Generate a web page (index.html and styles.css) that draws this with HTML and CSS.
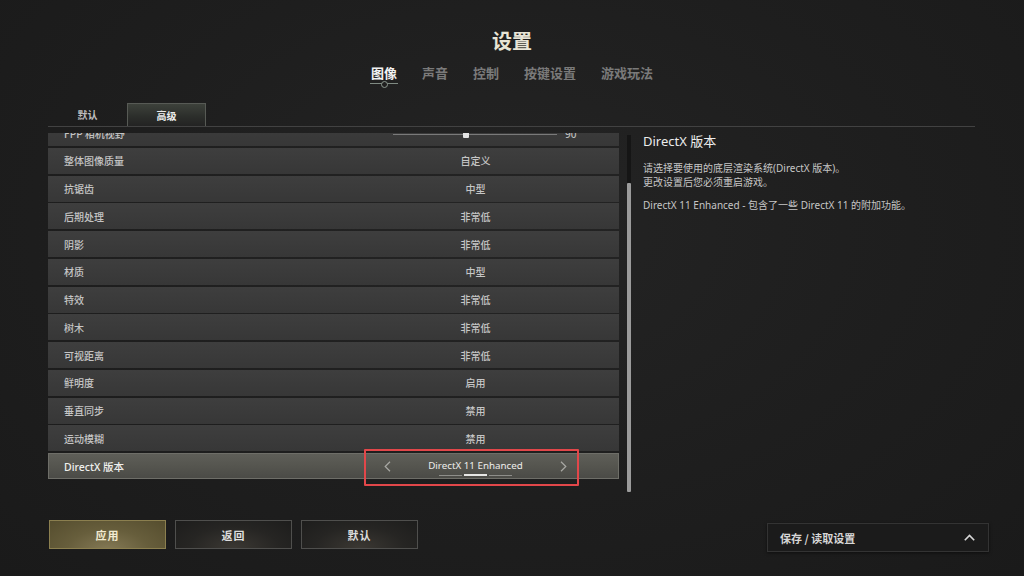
FILE: index.html
```html
<!DOCTYPE html>
<html lang="zh-CN">
<head>
<meta charset="utf-8">
<title>设置</title>
<link rel="stylesheet" href="styles.css">
</head>
<body>
<div class="page">
  <header class="header">
    <h1 class="title">设置</h1>
    <nav class="tabs">
      <span class="tab active">图像</span>
      <span class="tab">声音</span>
      <span class="tab">控制</span>
      <span class="tab">按键设置</span>
      <span class="tab">游戏玩法</span>
    </nav>
  </header>

  <div class="subtabs">
    <span class="subtab">默认</span>
    <span class="subtab selected">高级</span>
  </div>

  <main class="main">
    <div class="list-viewport">
      <div class="list">
        <div class="row">
          <span class="label">FPP 相机视野</span>
          <span class="slider">
            <span class="track track-left"></span>
            <span class="handle"></span>
            <span class="track track-right"></span>
            <span class="slider-val">90</span>
          </span>
        </div>
        <div class="row"><span class="label">整体图像质量</span><span class="value">自定义</span></div>
        <div class="row"><span class="label">抗锯齿</span><span class="value">中型</span></div>
        <div class="row"><span class="label">后期处理</span><span class="value">非常低</span></div>
        <div class="row"><span class="label">阴影</span><span class="value">非常低</span></div>
        <div class="row"><span class="label">材质</span><span class="value">中型</span></div>
        <div class="row"><span class="label">特效</span><span class="value">非常低</span></div>
        <div class="row"><span class="label">树木</span><span class="value">非常低</span></div>
        <div class="row"><span class="label">可视距离</span><span class="value">非常低</span></div>
        <div class="row"><span class="label">鲜明度</span><span class="value">启用</span></div>
        <div class="row"><span class="label">垂直同步</span><span class="value">禁用</span></div>
        <div class="row"><span class="label">运动模糊</span><span class="value">禁用</span></div>
        <div class="row current">
          <span class="label">DirectX 版本</span>
          <span class="picker">
            <svg class="arrow" width="7" height="11" viewBox="0 0 7 11"><path d="M6 0.8 L1.2 5.5 L6 10.2" fill="none" stroke="#a9a9a4" stroke-width="1.2"/></svg>
            <span class="picker-text">DirectX 11 Enhanced
              <span class="dots"><i class="seg"></i><i class="seg on"></i><i class="seg"></i></span>
            </span>
            <svg class="arrow" width="7" height="11" viewBox="0 0 7 11"><path d="M1 0.8 L5.8 5.5 L1 10.2" fill="none" stroke="#a9a9a4" stroke-width="1.2"/></svg>
            <span class="highlight"></span>
          </span>
        </div>
      </div>
    </div>

    <div class="scrollbar"><div class="thumb"></div></div>

    <aside class="info">
      <h2 class="info-title">DirectX 版本</h2>
      <p class="info-text">请选择要使用的底层渲染系统(DirectX 版本)。<br>更改设置后您必须重启游戏。</p>
      <p class="info-text extra">DirectX 11 Enhanced - 包含了一些 DirectX 11 的附加功能。</p>
    </aside>
  </main>

  <footer class="footer">
    <div class="buttons">
      <button class="btn primary">应用</button>
      <button class="btn">返回</button>
      <button class="btn">默认</button>
    </div>
    <div class="saveload">
      <span>保存 / 读取设置</span>
      <svg width="11" height="7" viewBox="0 0 11 7"><path d="M0.8 6.2 L5.5 1.4 L10.2 6.2" fill="none" stroke="#d8d8d8" stroke-width="1.6"/></svg>
    </div>
  </footer>
</div>
</body>
</html>
```

FILE: styles.css
```css
* { box-sizing: border-box; margin: 0; padding: 0; }

html, body {
  width: 1024px;
  height: 576px;
  overflow: hidden;
}

body {
  background: #1d1d1d;
  font-family: "Noto Sans", "Noto Sans CJK SC", sans-serif;
  color: #c8c8c8;
}

.page {
  width: 1024px;
  height: 576px;
  background: radial-gradient(ellipse at 50% 40%, #242424 0%, #1e1e1e 55%, #1a1a1a 100%);
}

.header {
  padding-top: 29px;
  display: flex;
  flex-direction: column;
  align-items: center;
}

.title {
  font-family: "Noto Sans CJK SC", sans-serif;
  font-size: 20px;
  line-height: 24px;
  font-weight: 700;
  color: #e8e5d6;
  letter-spacing: 0;
}

.tabs {
  margin-top: 12px;
  display: flex;
  gap: 25px;
  height: 16px;
}

.tab {
  position: relative;
  font-family: "Noto Sans CJK SC", sans-serif;
  font-size: 13px;
  line-height: 16px;
  font-weight: 700;
  color: #7a7a7a;
}

.tab.active {
  color: #f2f2f2;
}

.tab.active::before {
  content: "";
  position: absolute;
  left: -1px;
  right: -1px;
  top: 18px;
  height: 1px;
  background: #7f8a82;
}

.tab.active::after {
  content: "";
  position: absolute;
  left: 50%;
  top: 16px;
  width: 5px;
  height: 5px;
  margin-left: -2.5px;
  border: 1px solid #8c978e;
  border-radius: 50%;
  background: #1f1f1f;
}

.subtabs {
  margin: 22px 0 0 48px;
  width: 927px;
  height: 24px;
  display: flex;
  border-bottom: 1px solid #424242;
}

.subtab {
  width: 79px;
  height: 23px;
  display: flex;
  align-items: center;
  justify-content: center;
  font-family: "Noto Sans CJK SC", sans-serif;
  font-size: 10px;
  font-weight: 700;
  color: #bdbdbd;
}

.subtab.selected {
  color: #ececec;
  border: 1px solid #575a55;
  border-bottom: none;
  background: linear-gradient(to bottom, #3d413b 0%, #2b2d2a 60%, #232323 100%);
}

.main {
  display: flex;
  align-items: flex-start;
  height: 365px;
}

.list-viewport {
  margin: 6px 0 0 48px;
  width: 571px;
  height: 347px;
  clip-path: inset(0 -20px -20px -20px);
}

.list {
  margin-top: -13px;
  display: flex;
  flex-direction: column;
  gap: 1.75px;
}

.row {
  height: 26px;
  display: grid;
  grid-template-columns: 320px 215px 1fr;
  align-items: center;
  background: linear-gradient(to bottom, #3e3e3e, #373737);
  font-family: "Noto Sans CJK SC", sans-serif;
  font-size: 10px;
  font-weight: 500;
}

.label {
  padding-left: 16px;
  color: #c4c4c4;
}

.value {
  text-align: center;
  color: #c6c6c6;
}

.slider {
  display: flex;
  align-items: center;
  padding-left: 25px;
  padding-top: 2px;
}

.track {
  height: 1px;
  background: #7a7a7a;
}

.track-left { width: 70px; }
.track-right { width: 88px; }

.handle {
  width: 6px;
  height: 7px;
  background: #e4e4e4;
  border-radius: 1px;
}

.slider-val {
  margin-left: 8px;
  font-family: "Noto Sans", sans-serif;
  font-size: 10px;
  color: #bdbdbd;
}

.row.current {
  background: linear-gradient(to bottom, #5f5f59 0%, #55554f 50%, #4a4a46 100%);
  box-shadow: inset 0 0 0 1px #6e6e68;
}

.row.current .label {
  font-family: "Noto Sans", "Noto Sans CJK SC", sans-serif;
  font-size: 10.5px;
  color: #f0f0ee;
}

.picker {
  position: relative;
  height: 26px;
  display: flex;
  align-items: center;
  justify-content: space-between;
  padding: 0 16px;
}

.arrow { display: block; }

.picker-text {
  position: relative;
  font-family: "Noto Sans", sans-serif;
  font-size: 9.8px;
  font-weight: 400;
  line-height: 14px;
  color: #ededeb;
}

.dots {
  position: absolute;
  left: 50%;
  top: 15px;
  margin-left: -36.5px;
  display: flex;
  gap: 2px;
  align-items: center;
}

.seg {
  display: block;
  width: 23px;
  height: 1px;
  background: #8e8e8a;
}

.seg.on {
  height: 2px;
  background: #e6e6e4;
}

.highlight {
  position: absolute;
  left: -4px;
  top: -4px;
  width: 215px;
  height: 37px;
  border: 2px solid #e2474a;
  border-radius: 1px;
}

.scrollbar {
  margin: 8px 0 0 8px;
  width: 4px;
  height: 357px;
  background: #151515;
  padding-top: 48px;
}

.thumb {
  width: 4px;
  height: 309px;
  background: #9b9b9b;
  border-radius: 1px;
}

.info {
  margin: 6px 0 0 12px;
  width: 330px;
}

.info-title {
  font-family: "Noto Sans", "Noto Sans CJK SC", sans-serif;
  font-size: 13px;
  line-height: 16px;
  font-weight: 400;
  color: #ececec;
}

.info-text {
  margin-top: 12px;
  font-family: "Noto Sans", "Noto Sans CJK SC", sans-serif;
  font-size: 10px;
  line-height: 14px;
  color: #c6c6c6;
}

.info-text.extra {
  margin-top: 9px;
}

.footer {
  margin-top: 28px;
  display: flex;
  justify-content: space-between;
  align-items: flex-start;
  padding: 0 35px 0 49px;
}

.buttons {
  display: flex;
  gap: 9px;
}

.btn {
  width: 117px;
  height: 29px;
  font-family: "Noto Sans CJK SC", sans-serif;
  font-size: 11px;
  font-weight: 700;
  color: #dedede;
  letter-spacing: 1px;
  border: 1px solid #4f4f4d;
  background: radial-gradient(ellipse at 50% 100%, #3b3833 0%, #262523 55%, #1d1d1c 100%);
}

.btn.primary {
  color: #f1ead0;
  border-color: #8b7f4f;
  background: radial-gradient(ellipse at 50% 110%, #857a56 0%, #675e3c 50%, #554d2e 100%);
}

.saveload {
  margin-top: 3px;
  width: 222px;
  height: 29px;
  display: flex;
  align-items: center;
  justify-content: space-between;
  padding: 0 13px 0 12px;
  background: #1b1b1b;
  border: 1px solid #333;
  box-shadow: 0 1px 3px rgba(0,0,0,0.5);
  font-family: "Noto Sans CJK SC", sans-serif;
  font-size: 11px;
  font-weight: 700;
  color: #d6d6d6;
}
```
